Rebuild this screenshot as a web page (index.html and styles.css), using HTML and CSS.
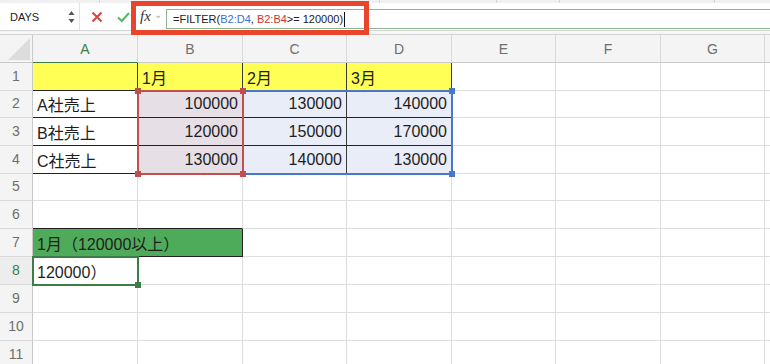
FILE: index.html
```html
<!DOCTYPE html>
<html lang="ja">

<head>
  <meta charset="UTF-8">
  <meta name="viewport" content="width=device-width, initial-scale=1.0">
  <title>FILTER</title>
  <link rel="stylesheet" href="styles.css">
</head>

<body>

  <!-- Formula bar -->
  <div class="topbar">
    <div class="strip">
      <span class="s1"></span><span class="s2"></span><span class="s3"></span><span class="s4"></span><span class="s5"></span>
    </div>
    <div class="bar">
      <div class="namebox">
        <span>DAYS</span>
        <svg class="spin" width="7" height="14" viewBox="0 0 7 14">
          <path d="M3.5 1 L6.5 5 L0.5 5 Z" fill="#555" />
          <path d="M3.5 13 L6.5 9 L0.5 9 Z" fill="#555" />
        </svg>
      </div>
      <div class="actions">
        <svg width="12" height="12" viewBox="0 0 12 12">
          <path d="M1.5 1.5 L10.5 10.5 M10.5 1.5 L1.5 10.5" stroke="#d8463b" stroke-width="2" fill="none" />
        </svg>
        <svg width="13" height="12" viewBox="0 0 13 12">
          <path d="M1 6.5 L4.8 10 L12 2" stroke="#5cb65f" stroke-width="2" fill="none" />
        </svg>
      </div>
      <div class="fx"><i>fx</i><span class="chev">⌄</span></div>
      <div class="input">
        =FILTER(<span class="ref-blue">B2:D4</span>,&nbsp;<span class="ref-red">B2:B4</span>&gt;= 120000)<span class="caret"></span>
      </div>
    </div>
    <!-- red annotation box -->
    <div class="annot"></div>
  </div>
  <div class="rule"></div>

  <!-- Sheet -->
  <div class="sheet" id="sheet"></div>

  <script>
    let cols = ["A", "B", "C", "D", "E", "F", "G", ""];
    let data = {
      A1: ["", "yellow tb"], B1: ["1月", "yellow tb"], C1: ["2月", "yellow tb"], D1: ["3月", "yellow tb"],
      A2: ["A社売上", "tb"], B2: ["100000", "tb num pink"], C2: ["130000", "tb num blue"], D2: ["140000", "tb num blue"],
      A3: ["B社売上", "tb"], B3: ["120000", "tb num pink"], C3: ["150000", "tb num blue"], D3: ["170000", "tb num blue"],
      A4: ["C社売上", "tb"], B4: ["130000", "tb num pink"], C4: ["140000", "tb num blue"], D4: ["130000", "tb num blue"],
      A6: ["", "bb"], B6: ["", "bb"],
      A7: ["1月（120000以上）", "green"],
      A8: ["120000）", ""]
    };

    let html = '<div class="corner"><span></span></div>';
    for (let c of cols) {
      html += `<div class="ch${c === "A" ? " active" : ""}">${c}</div>`;
    }

    for (let r = 1; r <= 11; r++) {
      html += `<div class="rh${r === 8 ? " active" : ""}">${r}</div>`;
      for (let c of cols) {
        if (r === 7 && c === "B") continue; // A7 spans two columns
        let cell = data[c + r] || ["", ""];
        html += `<div class="cell ${cell[1]}">${cell[0]}</div>`;
      }
    }

    // selection outlines (laid over the cells)
    html += '<div class="sel sel-blue"><i class="h tr"></i><i class="h br"></i></div>';
    html += '<div class="sel sel-red"><i class="h tl"></i><i class="h tr"></i><i class="h bl"></i><i class="h br"></i></div>';
    html += '<div class="sel sel-green"><i class="h br"></i></div>';

    document.getElementById("sheet").innerHTML = html;
  </script>

</body>

</html>
```

FILE: styles.css
```css
/* Global */
* {
  margin: 0;
  padding: 0;
  box-sizing: border-box;
}

body {
  width: 770px;
  height: 364px;
  overflow: hidden;
  background: #fff;
  font-family: "Liberation Sans", "Noto Sans CJK JP", sans-serif;
  color: #1e1e1e;
}

/* Formula bar */
.topbar {
  position: relative;
  height: 30px;
  background: #fff;
}

.strip {
  display: flex;
  height: 3px;
  background: #f0f0f0;
}

.strip span {
  border-right: 1px solid #d6d6d6;
}

.s1 { width: 100px; }
.s2 { width: 280px; }
.s3 { width: 117px; }
.s4 { width: 63px; }
.s5 { width: 155px; }

.bar {
  display: flex;
  height: 27px;
}

.namebox {
  width: 80px;
  display: flex;
  align-items: center;
  justify-content: space-between;
  padding: 0 4px 0 10px;
  font-size: 11px;
  color: #222;
  border-right: 1px solid #e2e2e2;
}

.actions {
  width: 51px;
  display: flex;
  align-items: center;
  gap: 14px;
  padding-left: 11px;
}

.fx {
  width: 35px;
  display: flex;
  align-items: center;
  padding-left: 9px;
  gap: 3px;
}

.fx i {
  font-family: "Liberation Serif", serif;
  font-size: 15px;
  color: #333;
}

.chev {
  font-size: 10px;
  color: #aaa;
  margin-top: -4px;
}

.input {
  flex: 1;
  height: 20px;
  margin-top: 6px;
  display: flex;
  align-items: center;
  padding-left: 6px;
  font-size: 11px;
  color: #222;
  border: 1px solid #8db591;
  border-right: none;
  white-space: nowrap;
}

.ref-blue { color: #3b6fd0; }
.ref-red { color: #c7362c; }

.caret {
  display: inline-block;
  width: 1px;
  height: 15px;
  margin-left: 1px;
  background: #111;
}

.annot {
  position: absolute;
  left: 131px;
  top: 1px;
  width: 238px;
  height: 34px;
  border: 5px solid #e9442c;
  z-index: 5;
}

.rule {
  height: 5px;
  background: #f6f6f6;
  border-top: 1px solid #d4d4d4;
  border-bottom: 1px solid #d4d4d4;
}

/* Sheet grid */
.sheet {
  position: relative;
  display: grid;
  grid-template-columns: 33px 105px 105px 104px 105px 104px 105px 104px 20px;
  grid-template-rows: 28px 28px 27px 28px 28px 27px 28px;
  grid-auto-rows: 28px;
}

.corner {
  display: flex;
  align-items: flex-end;
  justify-content: flex-end;
  padding: 0 2px 2px 0;
  background: #f4f4f4;
  border-right: 1px solid #c9c9c9;
  border-bottom: 1px solid #c9c9c9;
}

.corner span {
  width: 0;
  height: 0;
  border-left: 22px solid transparent;
  border-bottom: 22px solid #dcdcdc;
}

.ch,
.rh {
  display: flex;
  align-items: center;
  justify-content: center;
  background: #f4f4f4;
  font-size: 14px;
  line-height: 14px;
  color: #6e6e6e;
}

.ch {
  border-right: 1px solid #d9d9d9;
  border-bottom: 1px solid #c9c9c9;
}

.rh {
  border-right: 1px solid #c9c9c9;
  border-bottom: 1px solid #d9d9d9;
  padding-bottom: 2px;
}

.ch.active {
  color: #3c7d45;
  border-bottom-color: #3c7d45;
}

.rh.active {
  color: #3c7d45;
  background: #ededed;
}

.cell {
  display: flex;
  align-items: center;
  padding: 0 4px;
  font-size: 16px;
  white-space: nowrap;
  border-right: 1px solid #dedede;
  border-bottom: 1px solid #dedede;
}

.num {
  justify-content: flex-end;
}

.tb {
  border-right-color: #3a3a3a;
  border-bottom-color: #222;
}

.bb {
  border-bottom-color: #222;
}

.yellow { background: #ffff55; }
.pink { background: #e6dfe6; }
.blue { background: #e9edf7; }

.green {
  grid-column: span 2;
  background: #4eab5a;
  border-right-color: #222;
  border-bottom-color: #222;
}

/* Selection outlines */
.sel {
  position: absolute;
  inset: -1px;
  border: 2px solid;
  pointer-events: none;
}

.sel-red {
  grid-column: 3 / 4;
  grid-row: 3 / 6;
  border-color: #c0504d;
}

.sel-blue {
  grid-column: 4 / 6;
  grid-row: 3 / 6;
  border-color: #4a78c8;
}

.sel-green {
  grid-column: 2 / 3;
  grid-row: 9 / 10;
  border-color: #3c7d45;
}

.h {
  position: absolute;
  width: 6px;
  height: 6px;
}

.sel-red .h { background: #c0504d; }
.sel-blue .h { background: #4a78c8; }
.sel-green .h { background: #3c7d45; }

.tl { left: -4px; top: -4px; }
.tr { right: -4px; top: -4px; }
.bl { left: -4px; bottom: -4px; }
.br { right: -4px; bottom: -4px; }
```
